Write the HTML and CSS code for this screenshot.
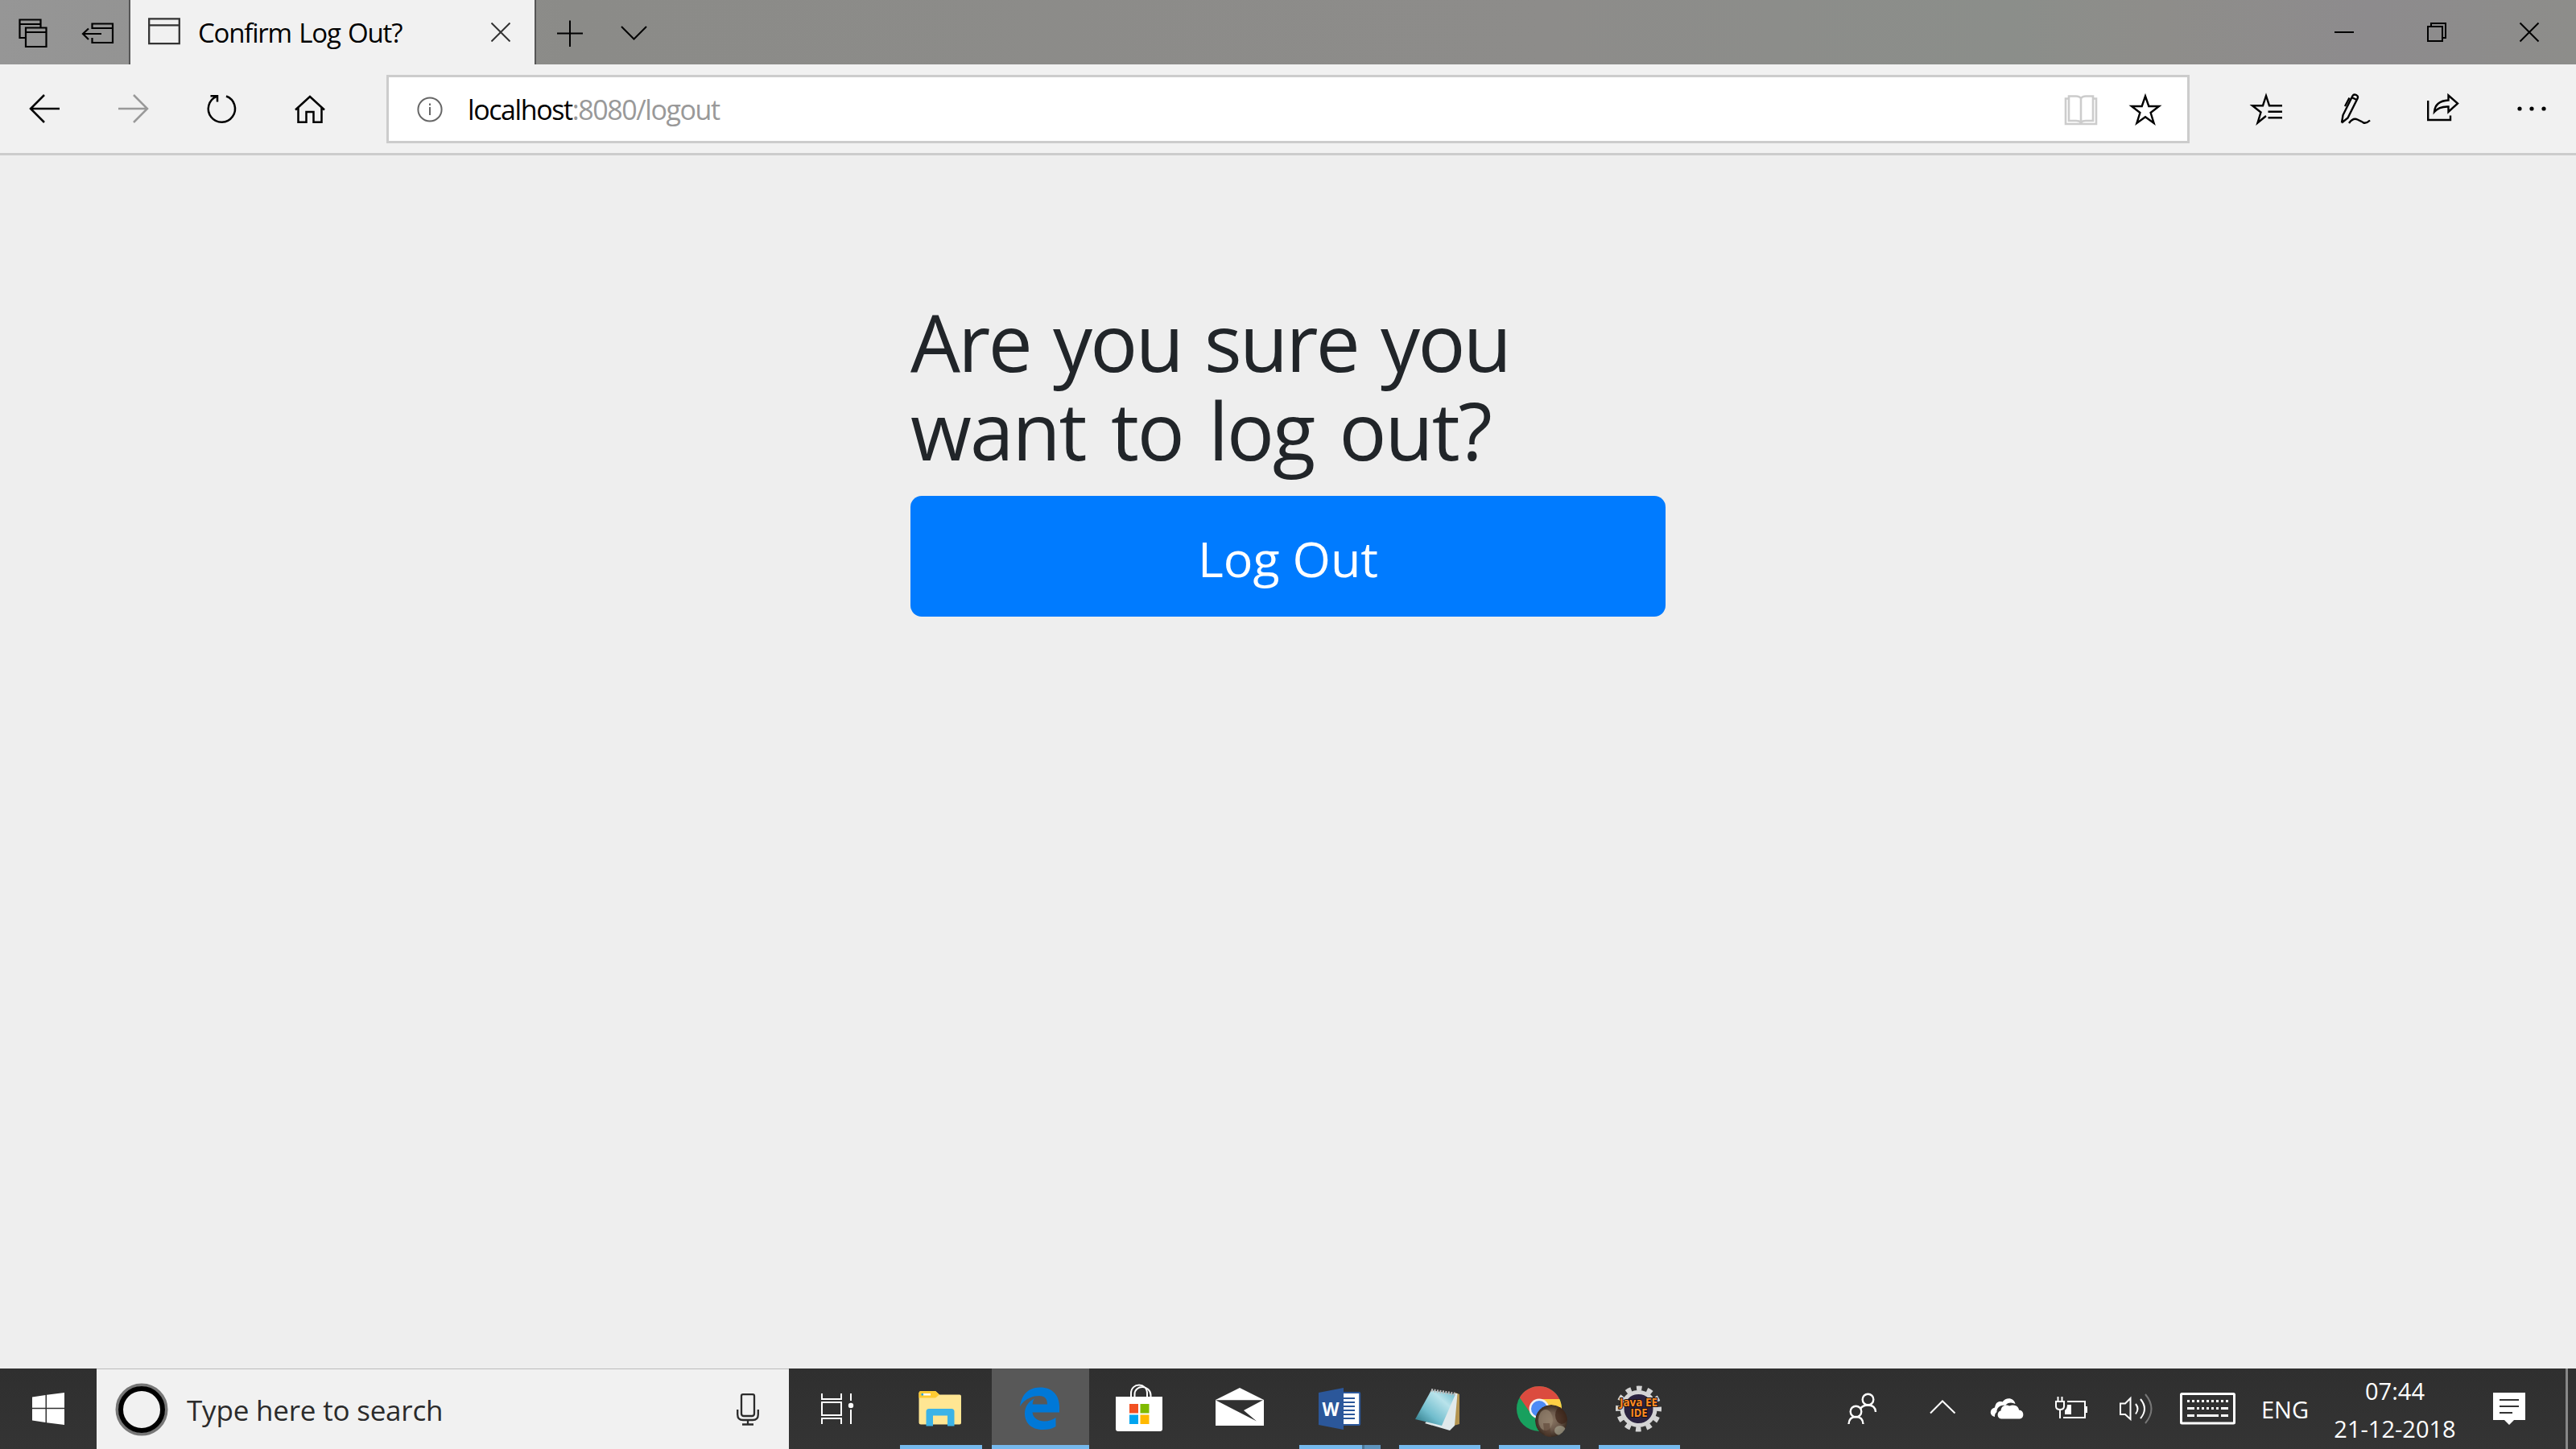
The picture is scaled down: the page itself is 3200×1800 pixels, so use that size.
FILE: index.html
```
<!DOCTYPE html>
<html lang="en">
<head>
<meta charset="utf-8">
<title>Confirm Log Out?</title>
<link rel="stylesheet" href="styles.css">
</head>
<body>
<header class="titlebar">
  <div class="tab-tools">
    <svg width="160" height="80" viewBox="0 0 160 80">
      <g fill="none" stroke="#000" stroke-width="2.2">
        <path d="M31 47H24.500V24.500H50.500V34M24.500 30H50.500"/>
        <path d="M32 34.500H57.500V58H32ZM32 40H57.500"/>
        <path d="M114.500 36V29.500H140V53H114.500V47M114.500 35H140M126 42H103M110 35.500L103 42L110 49"/>
      </g>
    </svg>
  </div>
  <div class="tab">
    <svg class="tab-icon" width="40" height="34" viewBox="0 0 40 34"><path d="M1.200 1.300H38.800V32.200H1.200ZM1.200 9.300H38.800" fill="none" stroke="#333" stroke-width="2.300"/></svg>
    <span class="tab-title">Confirm Log Out?</span>
    <svg width="24" height="24" viewBox="0 0 24 24"><path d="M.5.5L23.500 23.500M23.500.5L.5 23.500" stroke="#333" stroke-width="2" fill="none"/></svg>
  </div>
  <svg width="160" height="80" viewBox="0 0 160 80"><path d="M26 41.500H58M42 25.500V58M106 33L121.500 48.500L137 33" fill="none" stroke="#000" stroke-width="2"/></svg>
  <svg class="window-buttons" width="340" height="80" viewBox="2860 0 340 80"><path d="M2900 40H2924M3016 33H3034V51H3016ZM3020 33V29H3038V47H3034M3130.500 28.500L3153.500 51.500M3153.500 28.500L3130.500 51.500" fill="none" stroke="#000" stroke-width="2"/></svg>
</header>

<nav class="toolbar">
  <svg width="480" height="110" viewBox="0 80 480 110">
    <g fill="none" stroke="#000" stroke-width="2.500">
      <path d="M74 135H38M55 118L38 135L55 152"/>
      <path d="M147 135H183M166 118L183 135L166 152" stroke="#999"/>
      <path d="M281 119.500A16.600 16.600 0 1 1 269 119.800M261.500 119.300H270V126.500"/>
      <path d="M367 136.500L385 120L403 136.500M370.500 134V151.700H380.500V139H389.500V151.700H399.500V134"/>
    </g>
  </svg>
  <div class="address">
    <svg class="info" width="32" height="32" viewBox="0 0 32 32"><circle cx="16" cy="16" r="14.600" fill="none" stroke="#666" stroke-width="2"/><path d="M16 13V23M16 8.500V11" stroke="#666" stroke-width="2"/></svg>
    <span class="url"><span class="host">localhost</span><span class="path">:8080/logout</span></span>
    <svg width="154" height="78" viewBox="2563 97 154 78">
      <path d="M2570 119.500H2579Q2583 119.500 2585 122Q2587 119.500 2591 119.500H2600V150H2591Q2587 150 2585 152Q2583 150 2579 150H2570ZM2585 122V152M2570 122.500H2566V154H2604V122.500H2600" fill="none" stroke="#ccc" stroke-width="2.600"/>
      <path d="M2665 119.500L2669.300 132H2682L2671.600 140L2675.600 153L2665 145.300L2654.400 153L2658.400 140L2648 132H2660.700Z" fill="none" stroke="#000" stroke-width="2.400"/>
    </svg>
  </div>
  <svg class="toolbar-end" width="440" height="110" viewBox="2760 80 440 110">
    <g fill="none" stroke="#000" stroke-width="2.400">
      <path d="M2835 131.200H2819L2815 119L2811 131.200H2798L2808.500 139.500L2804.500 152.500L2815 144M2817.500 138.700H2835M2817.500 146.200H2835"/>
      <path d="M2909 152.500L2910.500 143L2922.500 119Q2924 116.500 2927 118Q2930 119.500 2928.500 122.500L2916.500 146.500L2909 152.500M2921.500 121L2927.500 124M2913 132L2918.500 121.500M2918 153Q2923 146 2928.500 148.500T2936 152.500Q2940 153.500 2944 149.500"/>
      <path d="M3016.200 125V149H3044V143.500M3024 139Q3025 125.500 3041.500 124.500V118.500L3053 128.500L3041.500 139V132.500Q3030 132 3024 139Z"/>
    </g>
    <circle cx="3130" cy="135" r="2.600"/><circle cx="3145" cy="135" r="2.600"/><circle cx="3160" cy="135" r="2.600"/>
  </svg>
</nav>

<main class="page">
  <form class="confirm">
    <h2 class="heading"><span class="line1">Are you sure you</span> <br><span class="line2">want to log out?</span></h2>
    <button class="logout" type="button">Log Out</button>
  </form>
</main>

<footer class="taskbar">
  <div class="start"><svg width="40" height="40" viewBox="0 0 40 40"><path d="M0 5.500L16.500 3V18.800H0ZM18 2.800L40 0V18.800H18ZM0 20.300H16.500V37L0 34.500ZM18 20.300H40V40L18 37.200Z" fill="#fff"/></svg></div>
  <div class="search">
    <svg width="66" height="66" viewBox="0 0 66 66"><circle cx="33" cy="33" r="30.500" fill="none" stroke="#777" stroke-width="4"/><circle cx="33" cy="33" r="26" fill="none" stroke="#000" stroke-width="6"/></svg>
    <span class="search-text">Type here to search</span>
    <svg width="28" height="40" viewBox="0 0 28 40"><path d="M8 1.200H20Q22 1.200 22 3V25Q22 28 19 28H9Q6 28 6 25V3Q6 1.200 8 1.200ZM1.200 20V26Q1.200 33 8 33H20Q26.800 33 26.800 26V20M14 33V39M7 38.500H21" fill="none" stroke="#2b2b2b" stroke-width="2.300"/></svg>
  </div>
  <div class="task"><svg width="138" height="100" viewBox="980 1700 138 100"><path d="M1021 1731V1738H1045V1731M1021 1742H1045V1758H1021ZM1021 1769V1762H1045V1769M1057 1731V1740M1057 1751V1769" fill="none" stroke="#fff" stroke-width="2"/><circle cx="1057" cy="1746" r="3.200" fill="#fff"/></svg></div>
  <div class="task open folder">
    <svg width="102" height="95" viewBox="1118 1700 102 95"><path d="M1143 1728H1162L1167 1732.500H1192Q1194 1732.500 1194 1734.500V1767.500Q1194 1769.500 1192 1769.500H1144Q1141.500 1769.500 1141.500 1767.500V1730Z" fill="#ffe693"/><path d="M1143 1728H1162L1167 1732.500L1162 1736.500H1141.500V1730Z" fill="#ffcb32"/><path d="M1147 1731H1156V1733.500H1147Z" fill="#fff"/><path d="M1144.500 1731H1147V1733.500H1144.500Z" fill="#2ca8e0"/><path d="M1150.500 1771.500V1753.500Q1150.500 1750 1154 1750H1182Q1185.500 1750 1185.500 1753.500V1771.500H1177V1758.500H1159V1771.500Z" fill="#3bb3e7"/></svg>
  </div>
  <div class="task open edge">
    <svg width="121" height="95" viewBox="1232 1700 121 95"><path d="M1267 1747C1269 1732 1278 1723.500 1292 1723.500C1308 1723.500 1316 1734 1316 1748V1754.500H1282.500C1283.500 1762 1290 1765.500 1297 1765.500C1303 1765.500 1308 1763.500 1311.500 1761V1772C1307 1775 1301 1776 1295 1776C1281 1776 1273 1767 1273 1756C1273 1748 1277 1741 1285.500 1737C1283.500 1739 1283 1741 1282.700 1744.500H1301C1301 1738 1298 1734 1291 1734C1281 1734 1272 1739 1267 1747Z" fill="#0078d7"/></svg>
  </div>
  <svg width="261" height="100" viewBox="1353 1700 261 100">
    <path d="M1405 1736V1731C1405 1717 1425 1717 1425 1731V1736M1409.500 1736V1732C1409.500 1720 1429 1720 1429.500 1733V1736" fill="none" stroke="#fff" stroke-width="2"/><path d="M1386 1735H1444V1775Q1444 1778 1441 1778H1389Q1386 1778 1386 1775Z" fill="#fff"/><path d="M1403 1744H1414V1755.500H1403Z" fill="#f25022"/><path d="M1416.500 1744H1427.500V1755.500H1416.500Z" fill="#7fba00"/><path d="M1403 1757.500H1414V1769H1403Z" fill="#00a4ef"/><path d="M1416.500 1757.500H1427.500V1769H1416.500Z" fill="#ffb900"/>
    <path d="M1510 1739L1540 1724L1570 1739V1771H1510Z" fill="#fff"/><path d="M1510 1739.200H1569L1545 1752L1561 1765.500Z" fill="#303030"/>
  </svg>
  <div class="task open word">
    <svg width="101" height="95" viewBox="1614 1700 101 95"><rect x="1667" y="1730" width="22.200" height="40" rx="1" fill="#fff" stroke="#2b579a" stroke-width="2"/><path d="M1669 1737H1683M1669 1742H1683M1669 1747H1683M1669 1752H1683M1669 1757H1683M1669 1762H1683" stroke="#2b579a" stroke-width="2"/><path d="M1638 1730L1669 1724V1776L1638 1770Z" fill="#2b579a"/><text x="1653" y="1759" text-anchor="middle" textLength="21" lengthAdjust="spacingAndGlyphs" class="word-letter">W</text></svg>
  </div>
  <div class="task open">
    <svg width="101" height="95" viewBox="1738 1700 101 95"><defs><linearGradient id="pad" x1="0" y1="1" x2="1" y2="0"><stop offset="0" stop-color="#236e7c"/><stop offset=".35" stop-color="#71bdcd"/><stop offset=".7" stop-color="#b9e3eb"/><stop offset="1" stop-color="#62b7c8"/></linearGradient></defs><path d="M1808 1730L1813 1732V1769L1806 1771Z" fill="#b39450"/><path d="M1806 1731L1810.500 1731L1807 1771L1801 1777L1770 1768Z" fill="#e0e9eb"/><path d="M1778 1727L1808 1732L1791 1771L1758 1763Z" fill="url(#pad)"/><path d="M1778 1727L1809 1732" stroke="#bbb" stroke-width="4" stroke-dasharray="2 1.500"/></svg>
  </div>
  <div class="task open">
    <svg width="101" height="95" viewBox="1862 1700 101 95"><defs><radialGradient id="av"><stop offset="0" stop-color="#8a7764"/><stop offset=".55" stop-color="#6c594b"/><stop offset="1" stop-color="#3a2b20"/></radialGradient><clipPath id="face"><circle cx="1927" cy="1765" r="20"/></clipPath></defs><circle cx="1912" cy="1750" r="28" fill="#18a05e"/><path d="M1912 1738H1937.300A28 28 0 0 1 1912 1778L1922.400 1756Z" fill="#ffce44"/><path d="M1887.800 1736A28 28 0 0 1 1937.300 1738H1912L1901.600 1756Z" fill="#db4b3f"/><circle cx="1912" cy="1750" r="12.500" fill="#f1f1f1"/><circle cx="1912" cy="1750" r="10" fill="#4c8bf5"/><g clip-path="url(#face)"><circle cx="1927" cy="1765" r="20" fill="url(#av)"/><ellipse cx="1920" cy="1764" rx="9" ry="13" fill="#94836f" opacity=".7"/><ellipse cx="1940" cy="1758" rx="8" ry="11" fill="#3c2418" opacity=".7"/><ellipse cx="1938" cy="1777" rx="7" ry="6" fill="#a5a28f" opacity=".7"/><path d="M1917 1768H1925L1927 1786H1919Z" fill="#54392b" opacity=".5"/></g></svg>
  </div>
  <div class="task open">
    <svg width="101" height="95" viewBox="1986 1700 101 95"><circle cx="2035.500" cy="1750" r="25.500" fill="none" stroke="#d4d4d4" stroke-width="6" stroke-dasharray="6.675 6.675" stroke-dashoffset="3.340"/><circle cx="2035.500" cy="1750" r="20.500" fill="#2b2340" stroke="#d4d4d4" stroke-width="5"/><g class="ee"><text x="2035.500" y="1747" text-anchor="middle" textLength="47" lengthAdjust="spacingAndGlyphs">Java EE</text><text x="2036" y="1760" text-anchor="middle" textLength="21" lengthAdjust="spacingAndGlyphs">IDE</text></g></svg>
  </div>
  <div class="tray">
    <svg width="500" height="100" viewBox="2290 1700 500 100">
      <g fill="none" stroke="#fff" stroke-width="2.400">
        <circle cx="2320.500" cy="1738.500" r="6.800"/><circle cx="2305.500" cy="1753.500" r="6.800"/><path d="M2296.500 1769Q2297 1760 2305.500 1760T2314.500 1769M2311 1750Q2314 1745.500 2320.500 1745.500Q2329.500 1745.500 2330 1754"/>
        <path d="M2398 1755.500L2413 1740.500L2428.500 1755.500" stroke-width="2"/>
        <path d="M2568 1741H2590V1761H2563" stroke-width="2"/>
        <path d="M2554 1741H2564V1747Q2564 1751 2559 1751Q2554 1751 2554 1747ZM2556.500 1735V1741M2561.500 1735V1741M2559 1751V1762" stroke-width="2"/>
        <path d="M2634 1743.500H2640L2646.500 1737V1763L2640 1757H2634Z" stroke-width="2"/>
        <path d="M2653 1744Q2658 1750 2653 1756.500M2659 1738Q2669 1750 2659 1762" stroke-width="2"/><path d="M2665 1732Q2680 1750 2665 1768" stroke="#777" stroke-width="2"/>
        <rect x="2709.500" y="1731.500" width="66" height="36.500" rx="1" stroke-width="3"/>
        <path d="M2717 1740.500H2768" stroke-width="3" stroke-dasharray="3 3"/><path d="M2717 1749.500H2726M2729 1749.500H2732M2735 1749.500H2738M2741 1749.500H2744M2747 1749.500H2750M2753 1749.500H2756M2759 1749.500H2768M2717 1758.500H2726M2729 1758.500H2756M2759 1758.500H2768" stroke-width="3"/>
      </g>
      <path d="M2568 1745H2573V1757H2565V1752Q2568 1750 2568 1745ZM2590 1747H2593V1755H2590Z" fill="#fff"/>
      <path d="M2478 1760C2471 1759 2471 1750 2478 1748.500C2479 1742 2483 1740 2487.500 1741.500C2492 1735 2502 1736 2503.500 1744C2499 1741.500 2494 1742 2491 1746C2484 1744.500 2480 1750 2480.500 1754C2478 1756 2478 1758 2478 1760Z" fill="#fff"/><path d="M2486 1762.500C2480 1762 2480.500 1753 2485.500 1752.500C2486 1745.500 2493 1744.500 2496 1746.500C2502 1743.500 2508 1747 2508 1751.500C2515 1752 2515 1762 2509 1762.500Z" fill="#fff"/>
    </svg>
    <span class="lang">ENG</span>
    <div class="clock"><span>07:44</span><span>21-12-2018</span></div>
    <svg class="notice" width="40" height="40" viewBox="0 0 40 40"><path d="M0 0H40V34H26L20 40L14 34H0Z" fill="#fff"/><path d="M8 9H32M8 17H32M8 25H24" stroke="#333" stroke-width="2"/></svg>
    <div class="desktop"></div>
  </div>
</footer>
</body>
</html>
```
FILE: styles.css
```
* { box-sizing: border-box; }
html, body { height: 100%; margin: 0; }
body { display: flex; flex-direction: column; width: 3200px; height: 1800px; overflow: hidden; background: #eee; font-family: "Open Sans", "Noto Sans", sans-serif; color: #000; }
svg { display: block; flex: none; }
span { white-space: nowrap; }

.titlebar { display: flex; height: 80px; flex: none; background: linear-gradient(90deg, #969696 0%, #8b8b88 22%, #8d8c8a 60%, #8b8e8a 78%, #8e8d8a 84%, #8d8b8d 92%, #8d8d8a 100%); }
.tab-tools { width: 160px; }
.tab { display: flex; align-items: center; width: 506px; padding-left: 22px; background: #f1f1f1; border: solid #555; border-width: 0 2px; }
.tab-icon { margin-top: -3px; }
.tab-title { width: 364px; margin-left: 22px; padding-top: 1px; font-size: 33px; line-height: 79px; letter-spacing: -1.2px; word-spacing: 2px; }
.window-buttons { margin-left: auto; }

.toolbar { display: flex; align-items: flex-start; height: 113px; flex: none; background: #f1f1f1; border-bottom: 3px solid #ccc; }
.address { display: flex; align-items: center; flex: 0 0 2240px; height: 85px; margin-top: 13px; background: #fff; border: 3px solid #ccc; }
.info { margin-left: 35px; }
.url { flex: 1; margin-left: 31px; padding-top: 2px; font-size: 34px; line-height: 77px; letter-spacing: -1.42px; }
.path { color: #999; }
.toolbar-end { margin-left: auto; }

.page { flex: 1; display: flex; justify-content: center; padding-top: 176px; }
.confirm { width: 938px; }
.heading { margin: 0 0 27px; font-size: 98px; line-height: 110px; font-weight: 400; color: #212529; }
.line1 { letter-spacing: -2.65px; word-spacing: 5px; }
.line2 { letter-spacing: -2px; word-spacing: 8px; }
.logout { display: block; width: 938px; height: 150px; padding: 4px 0 0; border: 0; border-radius: 14px; background: #007bff; color: #fff; font: 400 61px "Open Sans", sans-serif; }

.taskbar { display: flex; height: 100px; flex: none; background: linear-gradient(#2f2f2f, #343434); color: #fff; }
.start { display: flex; align-items: center; justify-content: center; width: 120px; }
.search { display: flex; align-items: center; width: 860px; padding: 0 37px 0 23px; background: #f1f1f1; border-top: 1px solid #bbb; color: #2b2b2b; }
.search-text { flex: 1; margin-left: 23px; padding-top: 1px; font-size: 35px; letter-spacing: -.2px; }
.task { height: 100px; flex: none; }
.open { width: 101px; margin-right: 23px; border-bottom: 5px solid #76b9ed; }
.folder { width: 102px; margin-right: 12px; }
.edge { width: 121px; margin-right: 0; background: #585858; }
.word { border-bottom: 0; background: linear-gradient(90deg, #76b9ed 78px, #4d7795 78px 81px, #5e94be 81px) bottom / 100% 5px no-repeat; }
.word-letter { font: 700 24px "Open Sans", sans-serif; fill: #fff; }
.ee text { font: 700 14px "Open Sans", sans-serif; fill: #ff8c22; stroke: #1a1010; stroke-width: 2px; paint-order: stroke; }
.tray { display: flex; align-items: center; margin-left: auto; width: 910px; }
.lang { width: 83px; margin-left: 19px; font-size: 29px; }
.clock { display: flex; flex-direction: column; align-items: center; width: 166px; padding-top: 2px; font-size: 29px; line-height: 47px; }
.notice { margin-left: 39px; }
.desktop { width: 3px; height: 100px; margin-left: 50px; background: #888; }
```
